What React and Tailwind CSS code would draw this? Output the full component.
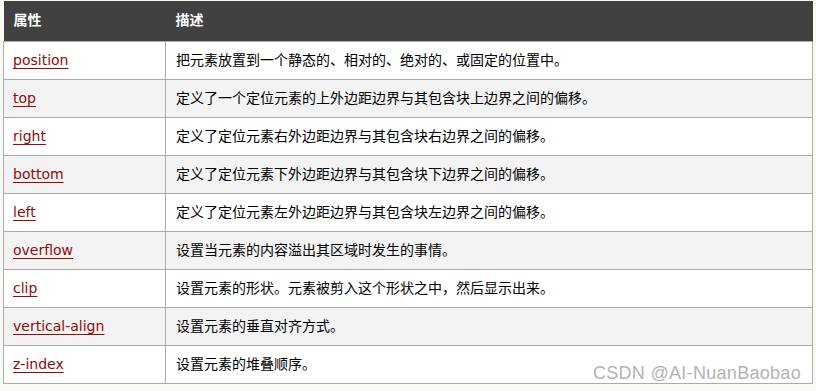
const rows = [
  ['position', '把元素放置到一个静态的、相对的、绝对的、或固定的位置中。'],
  ['top', '定义了一个定位元素的上外边距边界与其包含块上边界之间的偏移。'],
  ['right', '定义了定位元素右外边距边界与其包含块右边界之间的偏移。'],
  ['bottom', '定义了定位元素下外边距边界与其包含块下边界之间的偏移。'],
  ['left', '定义了定位元素左外边距边界与其包含块左边界之间的偏移。'],
  ['overflow', '设置当元素的内容溢出其区域时发生的事情。'],
  ['clip', '设置元素的形状。元素被剪入这个形状之中，然后显示出来。'],
  ['vertical-align', '设置元素的垂直对齐方式。'],
  ['z-index', '设置元素的堆叠顺序。'],
];

export default function App() {
  return (
    <div
      className="relative w-[816px] h-[391px] bg-[#fafaf5] pt-px pl-[3px] overflow-hidden"
      style={{ fontFamily: '"DejaVu Sans", "Noto Sans CJK SC", sans-serif' }}
    >
      <table className="w-[810px] border-collapse text-[14px] text-black">
        <thead>
          <tr className="h-[40px] bg-[#414141] text-white">
            <th className="w-[162px] pl-[10px] text-left font-bold">属性</th>
            <th className="pl-[10px] text-left font-bold">描述</th>
          </tr>
        </thead>
        <tbody>
          {rows.map(([prop, desc], i) => (
            <tr key={prop} className={i % 2 ? 'h-[38px] bg-[#f3f3f3]' : 'h-[38px] bg-white'}>
              <td className="border border-[#ababab] pl-[9px] align-middle">
                <a href="#" className="text-[#900b09] underline underline-offset-[3px]">
                  {prop}
                </a>
              </td>
              <td className="border border-[#ababab] pl-[10px] align-middle">{desc}</td>
            </tr>
          ))}
        </tbody>
      </table>
      <div
        className="absolute right-[15px] top-[360px] text-[18px] tracking-[0.3px] text-[#b3b3b3]"
        style={{ fontFamily: '"Liberation Sans", Arial, sans-serif' }}
      >
        CSDN @AI-NuanBaobao
      </div>
    </div>
  );
}
